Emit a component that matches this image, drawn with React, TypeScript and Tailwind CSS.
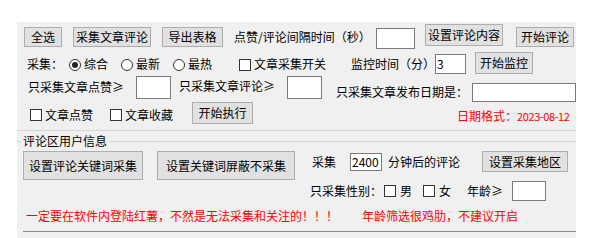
import React from "react";

const font = "font-['Noto_Sans_CJK_SC','Noto_Sans',sans-serif]";

function Btn({ className, children }: { className: string; children: React.ReactNode }) {
  return (
    <div
      className={`flex shrink-0 items-center justify-center border border-[#adadad] bg-[#e1e1e1] text-[12px] leading-none text-black ${className}`}
    >
      {children}
    </div>
  );
}

function Inp({ className, value }: { className: string; value?: string }) {
  return (
    <div
      className={`flex shrink-0 items-center border border-[#7a7a7a] bg-white pl-[1px] text-[12px] leading-none text-black ${className}`}
    >
      {value}
    </div>
  );
}

function Txt({ className, children }: { className: string; children: React.ReactNode }) {
  return <div className={`shrink-0 whitespace-nowrap text-[12px] ${className}`}>{children}</div>;
}

function Box({ className }: { className: string }) {
  return <div className={`shrink-0 border border-[#333333] bg-white ${className}`} />;
}

function Radio({ className, on }: { className: string; on?: boolean }) {
  return (
    <div
      className={`flex shrink-0 items-center justify-center rounded-full border border-[#333333] bg-white ${className}`}
    >
      {on && <div className="h-[6px] w-[6px] rounded-full bg-[#222222]" />}
    </div>
  );
}

export default function App() {
  return (
    <div className={`h-[238px] w-[590px] bg-white ${font}`}>
      <div className="ml-[17px] h-[22px]" />
      <div className="ml-[17px] flex h-[216px] w-[559px] flex-col overflow-hidden bg-[#f0f0f0] text-black">
        {/* Row 1 */}
        <div className="flex h-[28px] items-start">
          <Btn className="ml-[7px] mt-[5px] h-[20px] w-[38px]">全选</Btn>
          <Btn className="ml-[11px] mt-[5px] h-[20px] w-[78px]">采集文章评论</Btn>
          <Btn className="ml-[11px] mt-[5px] h-[20px] w-[61px]">导出表格</Btn>
          <Txt className="ml-[11px] mt-[5px] w-[142px] leading-[20px]">点赞/评论间隔时间（秒）</Txt>
          <Inp className="mt-[6px] h-[21px] w-[39px]" />
          <Btn className="ml-[10px] mt-[2px] h-[22px] w-[78px]">设置评论内容</Btn>
          <Btn className="ml-[13px] mt-[5px] h-[20px] w-[58px]">开始评论</Btn>
        </div>
        {/* Row 2 */}
        <div className="flex h-[24px] items-start">
          <Txt className="ml-[10px] mt-[4px] w-[36px] leading-[20px]">采集：</Txt>
          <Radio className="ml-[6px] mt-[9px] h-[12px] w-[12px]" on />
          <Txt className="ml-[3px] mt-[4px] w-[24px] leading-[20px]">综合</Txt>
          <Radio className="ml-[13px] mt-[9px] h-[12px] w-[12px]" />
          <Txt className="ml-[3px] mt-[4px] w-[24px] leading-[20px]">最新</Txt>
          <Radio className="ml-[13px] mt-[9px] h-[12px] w-[12px]" />
          <Txt className="ml-[3px] mt-[4px] w-[24px] leading-[20px]">最热</Txt>
          <Box className="ml-[27px] mt-[9px] h-[12px] w-[12px]" />
          <Txt className="ml-[3px] mt-[4px] w-[72px] leading-[20px]">文章采集开关</Txt>
          <Txt className="ml-[25px] mt-[4px] w-[84px] leading-[20px]">监控时间（分）</Txt>
          <Inp className="mt-[4px] h-[20px] w-[31px]" value="3" />
          <Btn className="ml-[9px] mt-[2px] h-[22px] w-[58px]">开始监控</Btn>
        </div>
        {/* Row 3 */}
        <div className="flex h-[28px] items-start">
          <Txt className="ml-[11px] mt-[3px] w-[108px] leading-[20px]">只采集文章点赞≥</Txt>
          <Inp className="mt-[2px] h-[23px] w-[35px]" />
          <Txt className="ml-[8px] mt-[2px] w-[108px] leading-[20px]">只采集文章评论≥</Txt>
          <Inp className="mt-[2px] h-[23px] w-[35px]" />
          <Txt className="ml-[14px] mt-[8px] w-[136px] leading-[20px]">只采集文章发布日期是：</Txt>
          <Inp className="mt-[9px] h-[19px] w-[104px]" />
        </div>
        {/* Row 4 */}
        <div className="flex h-[25px] items-start">
          <Box className="ml-[13px] mt-[7px] h-[12px] w-[12px]" />
          <Txt className="ml-[3px] mt-[3px] w-[48px] leading-[20px]">文章点赞</Txt>
          <Box className="ml-[17px] mt-[7px] h-[12px] w-[12px]" />
          <Txt className="ml-[3px] mt-[3px] w-[48px] leading-[20px]">文章收藏</Txt>
          <Btn className="ml-[19px] mt-[0px] h-[22px] w-[61px]">开始执行</Btn>
          <Txt className="ml-[204px] mt-[4px] flex items-baseline leading-[20px] text-[#ff0000]">
            <span>日期格式：</span>
            <span className="text-[11px] tracking-[-0.4px]">2023-08-12</span>
          </Txt>
        </div>
        {/* Separator */}
        <div className="flex h-[8px] flex-col">
          <div className="mt-[3px] h-[1px] w-full bg-[#d5d5d5]" />
        </div>
        {/* Group label */}
        <div className="flex h-[12px] items-center">
          <div className="h-[1px] w-[4px] bg-[#d5d5d5]" />
          <Txt className="ml-[2px] w-[86px] leading-[12px]">评论区用户信息</Txt>
          <div className="h-[1px] flex-1 bg-[#d5d5d5]" />
        </div>
        {/* Row 5 */}
        <div className="flex h-[34px] items-start">
          <Btn className="ml-[6px] mt-[4px] h-[29px] w-[120px]">设置评论关键词采集</Btn>
          <Btn className="ml-[14px] mt-[4px] h-[29px] w-[138px]">设置关键词屏蔽不采集</Btn>
          <Txt className="ml-[17px] mt-[5px] w-[24px] leading-[20px]">采集</Txt>
          <Inp className="ml-[14px] mt-[6px] h-[18px] w-[32px]" value="2400" />
          <Txt className="ml-[6px] mt-[5px] w-[72px] leading-[20px]">分钟后的评论</Txt>
          <Btn className="ml-[22px] mt-[4px] h-[21px] w-[86px]">设置采集地区</Btn>
        </div>
        {/* Row 6 */}
        <div className="flex h-[22px] items-start">
          <Txt className="ml-[293px] mt-[0px] w-[72px] leading-[20px]">只采集性别：</Txt>
          <Box className="ml-[2px] mt-[4px] h-[12px] w-[12px]" />
          <Txt className="ml-[4px] mt-[0px] w-[12px] leading-[20px]">男</Txt>
          <Box className="ml-[11px] mt-[4px] h-[12px] w-[12px]" />
          <Txt className="ml-[4px] mt-[0px] w-[12px] leading-[20px]">女</Txt>
          <Txt className="ml-[16px] mt-[0px] w-[45px] leading-[20px]">年龄≥</Txt>
          <Inp className="mt-[0px] h-[20px] w-[34px]" />
        </div>
        {/* Row 7 */}
        <div className="flex h-[28px] items-start text-[#ff0000]">
          <Txt className="ml-[9px] mt-[3px] w-[336px] leading-[20px]">一定要在软件内登陆红薯，不然是无法采集和关注的！！！</Txt>
          <Txt className="mt-[3px] leading-[20px]">年龄筛选很鸡肋，不建议开启</Txt>
        </div>
        <div className="ml-[6px] h-[1px] flex-none bg-[#8a8a8a]" />
      </div>
    </div>
  );
}
